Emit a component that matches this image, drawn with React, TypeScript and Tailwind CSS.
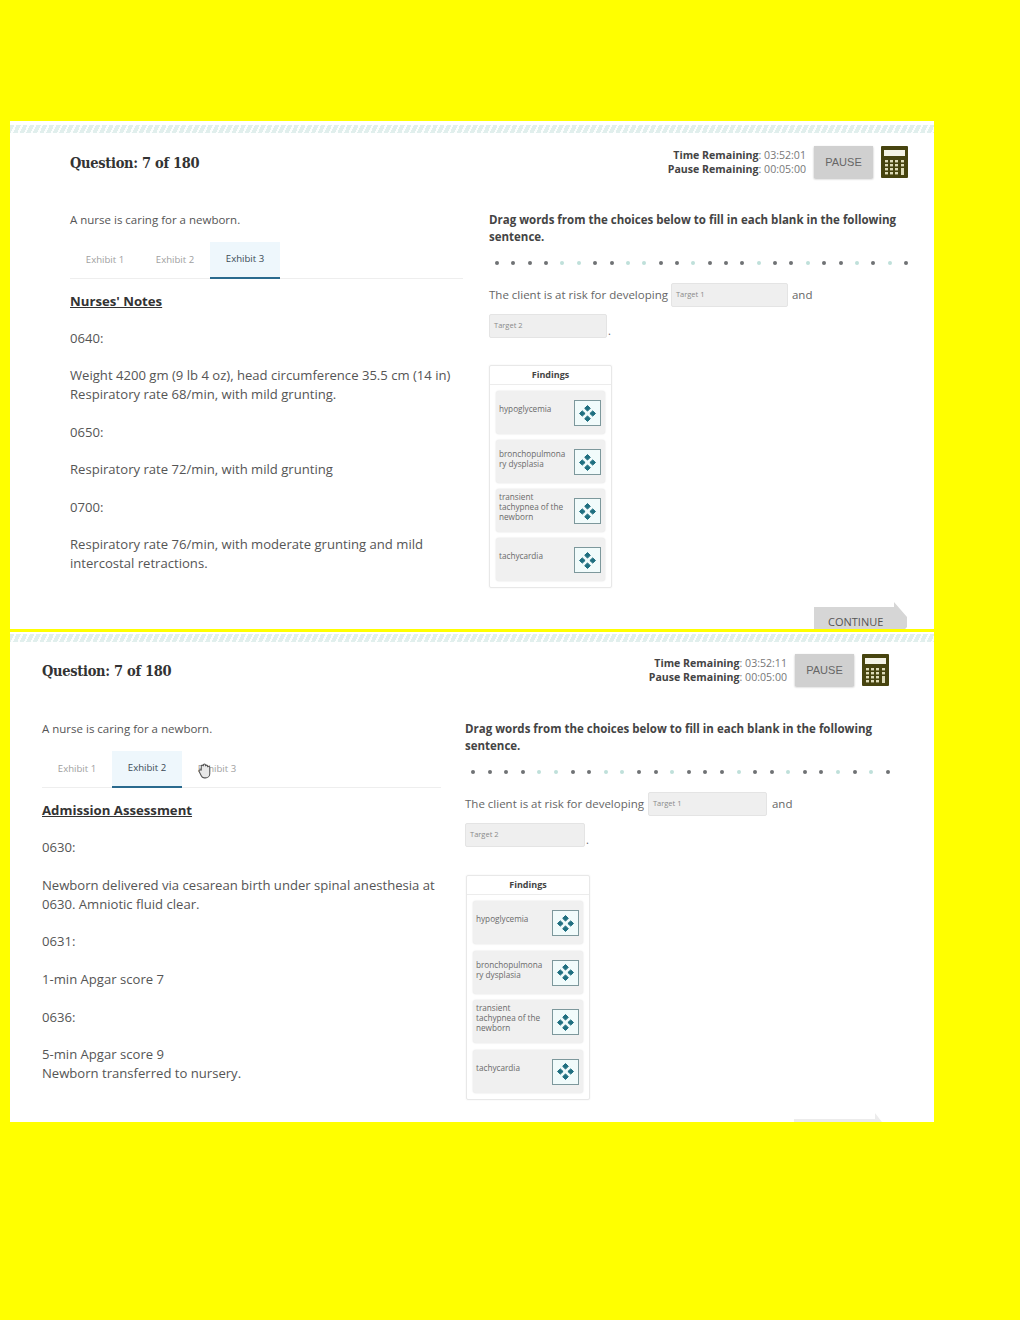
import React from 'react';

const dotPattern = 'ddddttddttddtdddtddtddtdtd'.split('');

const CalculatorIcon = () => (
    <svg width="27" height="32" viewBox="0 0 27 32">
        <rect width="27" height="32" rx="1" fill="#47440f" />
        <rect x="3" y="4" width="21" height="6" fill="#f4f3e6" />
        {[14, 18, 22, 26].map(y =>
            [4, 9, 14, 20].map(x => (
                <rect key={`${x}-${y}`} x={x} y={y} width="3" height="2.4" fill="#dedbb8" />
            ))
        )}
        <rect x="20" y="22" width="3" height="7" fill="#dedbb8" />
    </svg>
);

const MoveIcon = () => (
    <div className="w-[27px] h-[26px] shrink-0 bg-[#f1fbfb] border border-[#7d989c] flex items-center justify-center">
        <svg width="19" height="19" viewBox="0 0 19 19" fill="#1f6f80" stroke="#1f6f80" strokeWidth="1" strokeLinejoin="round">
            <path d="M9.5 1.5 L12.3 4.3 L9.5 7.1 L6.7 4.3 Z" />
            <path d="M9.5 11.9 L12.3 14.7 L9.5 17.5 L6.7 14.7 Z" />
            <path d="M1.5 9.5 L4.3 6.9 L7.1 9.5 L4.3 12.1 Z" />
            <path d="M11.9 9.5 L14.7 6.9 L17.5 9.5 L14.7 12.1 Z" />
        </svg>
    </div>
);

const TopStripe: React.FC<{ className: string }> = ({ className }) => (
    <div className={`h-[8px] ${className} bg-[repeating-linear-gradient(115deg,#e1efed_0px,#e1efed_4px,#fcfefe_4px,#fcfefe_6px)]`} />
);

const Finding: React.FC<{ label: React.ReactNode; top: string }> = ({ label, top }) => (
    <div className="h-[43px] bg-[#f0f0f0] rounded-[3px] flex items-start pl-[3px] pr-[4px] shadow-[0_0_2px_#ddd]">
        <div className={`flex-1 ${top} text-[8.2px] leading-[10px] text-[#6a6a6a]`}>{label}</div>
        <div className="mt-[9px]"><MoveIcon /></div>
    </div>
);

const FindingsBox: React.FC<{ wide?: boolean }> = ({ wide }) => (
    <div className={`${wide ? 'w-[124px] ml-[1px]' : 'w-[123px]'} border border-[#e8e8e8] rounded-[2px] shadow-[0_0_2px_#eee]`}>
        <div className="h-[19px] flex items-center justify-center border-b border-[#ececec] text-[9px] font-bold text-[#444]">Findings</div>
        <div className={`px-[6px] pt-[6px] pb-[6px] flex flex-col ${wide ? 'gap-[6.5px]' : 'gap-[6px]'}`}>
            <Finding label="hypoglycemia" top="mt-[13px]" />
            <Finding label={<>bronchopulmona<br />ry dysplasia</>} top="mt-[9px]" />
            <Finding label={<>transient<br />tachypnea of the<br />newborn</>} top="mt-[3px]" />
            <Finding label="tachycardia" top="mt-[13px]" />
        </div>
    </div>
);

const TargetBox: React.FC<{ label: string; width: string }> = ({ label, width }) => (
    <div className={`${width} h-[24px] bg-[#efefef] border border-[#e4e4e4] rounded-[2px] pl-[4px] flex items-center text-[7.5px] text-[#8a8a8a]`}>{label}</div>
);

const Panel: React.FC<{
    className: string;
    stripe: string;
    timer: string;
    active: number;
    heading: string;
    blocks: string[][];
    pl: string;
    headerPr: string;
    titleMt: string;
    bodyMt: string;
    leftW: string;
    rightMl: string;
    blockGap: string;
    wide?: boolean;
    children?: React.ReactNode;
}> = ({ className, stripe, timer, active, heading, blocks, pl, headerPr, titleMt, bodyMt, leftW, rightMl, blockGap, wide, children }) => (
    <div className={`relative bg-white mx-[10px] w-[924px] overflow-hidden ${className}`}>
        <TopStripe className={stripe} />
        <div className={`${pl} ${headerPr} flex items-start justify-between ${titleMt}`}>
            <h1 className="text-[14.5px] leading-[22px] mt-[6px] font-bold tracking-[-0.3px] text-[#333] font-['DejaVu_Serif_Condensed','DejaVu_Serif',serif]">Question: 7 of 180</h1>
            <div className="flex items-center gap-[8px]">
                <div className="text-right text-[10.6px] leading-[14px] text-[#777]">
                    <div><span className="font-bold text-[#444]">Time Remaining</span>: {timer}</div>
                    <div><span className="font-bold text-[#444]">Pause Remaining</span>: 00:05:00</div>
                </div>
                <div className="w-[59px] h-[32px] bg-[#d0d0d0] shadow-[0_1px_2px_#bbb] flex items-center justify-center text-[11px] text-[#666] font-['Liberation_Sans',sans-serif]">PAUSE</div>
                <CalculatorIcon />
            </div>
        </div>
        <div className={`${pl} flex ${bodyMt}`}>
            <div className={`${leftW} shrink-0 relative`}>
                <p className="text-[11.5px] leading-[16px] text-[#555]">A nurse is caring for a newborn.</p>
                <div className="flex mt-[14px] h-[37px] border-b border-[#eeeeee]">
                    {[1, 2, 3].map(n => (
                        <div key={n} className={`w-[70px] flex items-center justify-center text-[9.6px] -mb-px ${n === active ? 'bg-[#eef7fc] border-b-2 border-[#2a6a8e] text-[#3a4a55]' : 'text-[#a0a0a0]'}`}>
                            Exhibit {n}
                        </div>
                    ))}
                </div>
                {wide && (
                    <svg className="absolute left-[156px] top-[42px]" width="15" height="17" viewBox="0 0 14 16" fill="#e8e8e8" stroke="#555" strokeWidth="1">
                        <path d="M3 7 V3 a1 1 0 0 1 2 0 V2 a1 1 0 0 1 2 0 V3 a1 1 0 0 1 2 0 V4 a1 1 0 0 1 2 0 V10 a4 4 0 0 1 -4 4 H6 a3 3 0 0 1 -3 -2 L1 8 a1 1 0 0 1 2 -1 Z" />
                    </svg>
                )}
                <h2 className="mt-[13px] text-[13.2px] leading-[18px] font-bold text-[#333] underline">{heading}</h2>
                <div className={`mt-[19px] flex flex-col ${blockGap} text-[13.1px] leading-[19px] text-[#555]`}>
                    {blocks.map((lines, i) => (
                        <p key={i}>{lines.map((l, j) => <span key={j} className="block whitespace-nowrap">{l}</span>)}</p>
                    ))}
                </div>
            </div>
            <div className={`${rightMl} w-[425px] shrink-0`}>
                <p className="text-[11.5px] leading-[16.5px] font-bold text-[#444] whitespace-nowrap">
                    Drag words from the choices below to fill in each blank in the following<br />sentence.
                </p>
                <div className={`mt-[13px] ml-[6px] ${wide ? '' : 'mr-[6px]'} flex justify-between items-center h-[10px]`}>
                    {dotPattern.map((d, i) => (
                        <span key={i} className={`w-[4px] h-[4px] rounded-full ${d === 'd' ? 'bg-[#6f7274]' : 'bg-[#bfe0da]'}`} />
                    ))}
                </div>
                <div className={`mt-[15px] flex items-center ${wide ? 'gap-[4px]' : 'gap-[3px]'} text-[11.5px] text-[#666]`}>
                    <span>The client is at risk for developing</span>
                    <TargetBox label="Target 1" width={wide ? 'w-[119px]' : 'w-[117px]'} />
                    <span className="ml-[1px]">and</span>
                </div>
                <div className="mt-[7px] flex items-end gap-[1px] text-[11px] text-[#666]">
                    <TargetBox label="Target 2" width={wide ? 'w-[120px]' : 'w-[118px]'} />
                    <span className="leading-[14px]">.</span>
                </div>
                <div className={wide ? 'mt-[28px]' : 'mt-[27px]'}><FindingsBox wide={wide} /></div>
            </div>
        </div>
        {children}
    </div>
);

const App: React.FC = () => (
    <div className="w-[1020px] h-[1320px] bg-[#ffff00] pt-[121px] font-['Open_Sans',sans-serif]">
        <Panel
            className="h-[508px]"
            stripe="mt-[4px]"
            timer="03:52:01"
            active={3}
            heading="Nurses' Notes"
            pl="pl-[60px]"
            headerPr="pr-[26px]"
            titleMt="mt-[13px]"
            bodyMt="mt-[34px]"
            leftW="w-[393px]"
            rightMl="ml-[26px]"
            blockGap="gap-[18.4px]"
            blocks={[
                ['0640:'],
                ['Weight 4200 gm (9 lb 4 oz), head circumference 35.5 cm (14 in)', 'Respiratory rate 68/min, with mild grunting.'],
                ['0650:'],
                ['Respiratory rate 72/min, with mild grunting'],
                ['0700:'],
                ['Respiratory rate 76/min, with moderate grunting and mild', 'intercostal retractions.'],
            ]}
        >
            <div className="absolute right-[27px] bottom-0 w-[93px] h-[27px] bg-[#d6d6d6] [clip-path:polygon(0_5px,86%_5px,86%_0,100%_15px,100%_25px,98%_100%,0_100%)] flex items-start pl-[14px] pt-[13px] text-[11px] leading-[14px] text-[#555]">CONTINUE</div>
        </Panel>
        <div className="h-[3px]" />
        <Panel
            className="h-[490px]"
            stripe="mt-[2px]"
            timer="03:52:11"
            active={2}
            heading="Admission Assessment"
            pl="pl-[32px]"
            headerPr="pr-[45px]"
            titleMt="mt-[12px]"
            bodyMt="mt-[35px]"
            leftW="w-[399px]"
            rightMl="ml-[24px]"
            blockGap="gap-[18.7px]"
            wide
            blocks={[
                ['0630:'],
                ['Newborn delivered via cesarean birth under spinal anesthesia at', '0630. Amniotic fluid clear.'],
                ['0631:'],
                ['1-min Apgar score 7'],
                ['0636:'],
                ['5-min Apgar score 9', 'Newborn transferred to nursery.'],
            ]}
        >
            <div className="absolute left-[784px] bottom-0 w-[88px] h-[9px] bg-[#ececec] [clip-path:polygon(0_6px,92%_6px,92%_0,100%_100%,0_100%)]" />
        </Panel>
    </div>
);

export default App;
